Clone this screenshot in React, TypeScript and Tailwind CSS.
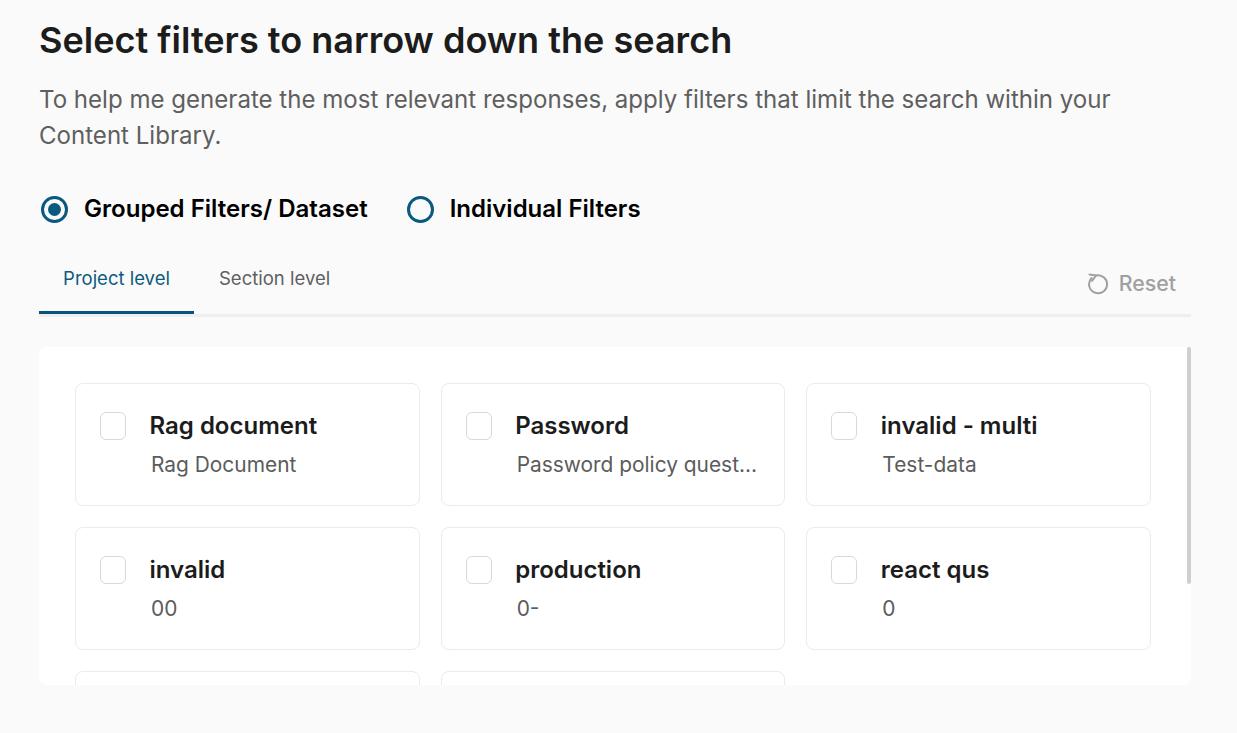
const filters = [
  { title: 'Rag document', desc: 'Rag Document' },
  { title: 'Password', desc: 'Password policy questions' },
  { title: 'invalid - multi', desc: 'Test-data' },
  { title: 'invalid', desc: '00' },
  { title: 'production', desc: '0-' },
  { title: 'react qus', desc: '0' },
  { title: 'sample', desc: 'data' },
  { title: 'testing', desc: 'data' },
];

const ResetIcon = () => (
  <svg width="22" height="22" viewBox="0 0 22 22" fill="none" stroke="currentColor" strokeWidth="2" strokeLinecap="round" strokeLinejoin="round">
    <path d="M9 2.5A9 9 0 1 1 4.6 5" />
    <path d="M2.5 1.5 9 2.5 5 8" />
  </svg>
);

function FilterCard({ title, desc }: { title: string; desc: string }) {
  return (
    <div className="flex h-[123px] shrink-0 gap-[23.5px] rounded-lg border border-[#ebebeb] bg-white pl-[24px] pr-[24px] pt-[28px]">
      <div className="h-[28px] w-[26px] shrink-0 rounded-md border border-[#d9d9d9] bg-white" />
      <div className="min-w-0 flex-1">
        <div className="text-[24px] font-semibold leading-[28px] text-[#1c1c1c]">{title}</div>
        <div className="mt-[11px] truncate pl-[1.5px] text-[20.9px] leading-[28px] text-[#5c5c5c]">{desc}</div>
      </div>
    </div>
  );
}

export default function App() {
  return (
    <div className="h-[733px] w-[1237px] overflow-hidden bg-[#fafafa] pl-[39px] pr-[46px] pt-[17px] font-['Inter',sans-serif]">
      <h1 className="text-[36.05px] font-semibold leading-[46px] text-[#1c1c1c]">Select filters to narrow down the search</h1>
      <p className="mt-[19px] text-[24.07px] leading-[36px] text-[#5f5f5f]">
        To help me generate the most relevant responses, apply filters that limit the search within your Content Library.
      </p>
      <div className="mt-[37px] flex h-[36px] items-center pl-[2px]">
        <div className="flex items-center gap-[16px]">
          <span className="flex h-[27px] w-[27px] items-center justify-center rounded-full border-[3px] border-[#0a5a80]">
            <span className="h-[13px] w-[13px] rounded-full bg-[#0a5a80]" />
          </span>
          <span className="text-[24.05px] font-semibold text-black">Grouped Filters/ Dataset</span>
        </div>
        <div className="ml-[39px] flex items-center gap-[16px]">
          <span className="h-[27px] w-[27px] rounded-full border-[3px] border-[#0a5a80]" />
          <span className="text-[24px] font-semibold text-black">Individual Filters</span>
        </div>
      </div>
      <div className="mt-[25px] flex h-[65px] items-start border-b-[3px] border-[#eeeeee]">
        <div className="flex h-[62px] w-[155px] justify-center border-b-[3px] border-[#06547e] pt-[13px] text-[18.5px] text-[#0a5a80]">Project level</div>
        <div className="ml-[25px] pt-[13px] text-[18.5px] text-[#5f5f5f]">Section level</div>
        <div className="ml-auto mr-[15px] mt-[16px] flex items-center gap-[10px] text-[#a0a0a0]">
          <ResetIcon />
          <span className="text-[21.3px] font-medium">Reset</span>
        </div>
      </div>
      <div className="relative mt-[30px]">
        <div className="h-[338px] overflow-hidden rounded-lg bg-white">
          <div className="grid grid-cols-3 gap-x-[21px] gap-y-[21px] pl-[36px] pr-[40px] pt-[36px]">
            {filters.map((f) => (
              <FilterCard key={f.title} title={f.title} desc={f.desc} />
            ))}
          </div>
        </div>
        <div className="absolute right-0 top-0 h-[237px] w-[4px] rounded-sm bg-[#cfcfcf]" />
      </div>
    </div>
  );
}
